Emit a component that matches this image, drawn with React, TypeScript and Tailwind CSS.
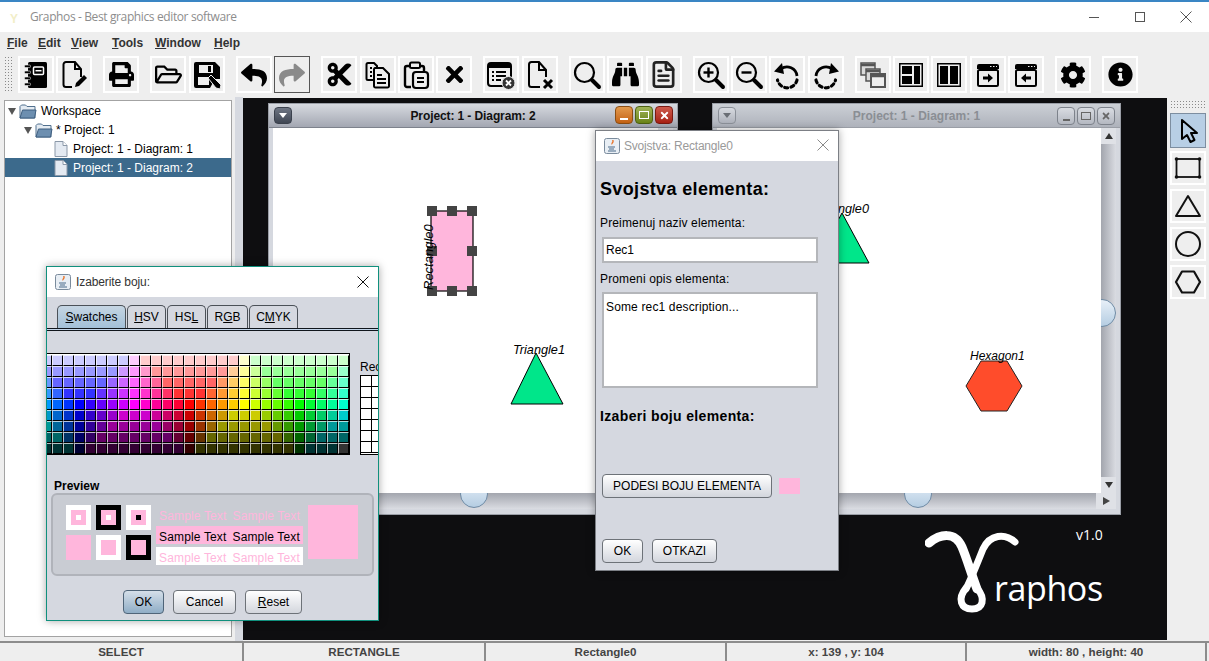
import { ReactNode } from 'react';
import { FaBinoculars, FaCog, FaCut, FaInfoCircle, FaPrint, FaRegFolderOpen, FaReply, FaShare, FaTimes } from 'react-icons/fa';
import { FileText } from 'lucide-react';

const PINK = '#ffb6dc';

const Notebook = () => (
  <svg width="28" height="28" viewBox="0 0 28 28">
    <rect x="6" y="1" width="19" height="26" rx="1.5" fill="#000" />
    <rect x="11.5" y="6" width="10" height="7.5" rx="1" fill="none" stroke="#fff" strokeWidth="1.5" />
    <line x1="13.5" y1="9.7" x2="19.5" y2="9.7" stroke="#fff" strokeWidth="1.5" />
    {[4, 10, 16, 22].map((y) => (
      <rect key={y} x="2.5" y={y} width="6" height="2.6" rx="1" fill="#000" stroke="#eee" strokeWidth="0.6" />
    ))}
  </svg>
);

const FilePencil = () => (
  <svg width="30" height="30" viewBox="0 0 30 30" fill="none" stroke="#000" strokeWidth="2">
    <path d="M13 27H7a2.5 2.5 0 0 1-2.500-2.500V4.500A2.500 2.500 0 0 1 7 2h9l6 7v8" />
    <path d="M16 2v7h6" />
    <path d="M16 27l1-4 8-8 3 3-8 8z" fill="#000" stroke="none" />
  </svg>
);

const SavePen = () => (
  <svg width="30" height="30" viewBox="0 0 30 30">
    <path d="M4 2h19l5 5v12h-5l-5 9H4a2 2 0 0 1-2-2V4a2 2 0 0 1 2-2z" fill="#000" />
    <rect x="7" y="5" width="14" height="8" fill="#eee" />
    <rect x="16" y="6" width="3" height="6" fill="#000" />
    <rect x="6" y="17" width="11" height="8" fill="#eee" />
    <path d="M16 18l3-3 10 10-1 4-4-1z" fill="#000" stroke="#eee" />
  </svg>
);

const CopyDocs = () => (
  <svg width="28" height="28" viewBox="0 0 28 28" fill="none" stroke="#000" strokeWidth="2">
    <path d="M9 19H4a1.500 1.500 0 0 1-1.500-1.500v-14A1.500 1.500 0 0 1 4 2h6l3 3v2" />
    <path d="M11 7h8l6 6v12a1.500 1.500 0 0 1-1.500 1.500h-12A1.500 1.500 0 0 1 10 25V8.500A1.500 1.500 0 0 1 11 7z" />
    <path d="M13 14h5M13 18h9M13 22h9M6 7h2M6 11h2M6 15h2" />
  </svg>
);

const ClipboardDoc = () => (
  <svg width="30" height="30" viewBox="0 0 30 30" fill="none" stroke="#000" strokeWidth="2">
    <path d="M10 27H6a2 2 0 0 1-2-2V8a2 2 0 0 1 2-2h3M19 6h2a2 2 0 0 1 2 2v3" strokeWidth="2.400" />
    <rect x="9" y="2.500" width="10" height="5.500" rx="1.500" />
    <rect x="12" y="12" width="15" height="16" rx="3" strokeWidth="2.200" />
    <path d="M16 18h7M16 22h7" />
  </svg>
);

const ListX = () => (
  <svg width="30" height="30" viewBox="0 0 30 30">
    <rect x="2" y="3" width="23" height="23" rx="3" fill="none" stroke="#000" strokeWidth="2" />
    <rect x="2" y="3" width="23" height="5" fill="#000" />
    <path d="M6 12h2M10 12h10M6 16h2M10 16h10M6 20h2M10 20h5" stroke="#000" strokeWidth="1.800" />
    <circle cx="22.500" cy="23" r="6.500" fill="#333" stroke="#eee" />
    <path d="M20 20.500l5 5M25 20.500l-5 5" stroke="#fff" strokeWidth="1.800" />
  </svg>
);

const FileCross = () => (
  <svg width="30" height="30" viewBox="0 0 30 30" fill="none" stroke="#000" strokeWidth="2">
    <path d="M15 27H6.500A2.500 2.500 0 0 1 4 24.500v-20A2.500 2.500 0 0 1 6.500 2H14l7 8v7" />
    <path d="M14 2v8h7" />
    <path d="M19 20l8 8M27 20l-8 8" strokeWidth="3" />
  </svg>
);

const MagGlass = ({ sign = '' }: { sign?: '' | '+' | '-' }) => (
  <svg width="30" height="30" viewBox="0 0 30 30" fill="none" stroke="#000">
    <circle cx="12.500" cy="12.500" r="9.500" strokeWidth="2.200" />
    <path d="M20 20l7 7" strokeWidth="4" strokeLinecap="round" />
    {sign !== '' && <path d="M7.500 12.500h10" strokeWidth="2.400" />}
    {sign === '+' && <path d="M12.500 7.500v10" strokeWidth="2.400" />}
  </svg>
);

const RotateDots = ({ flip = false }: { flip?: boolean }) => (
  <svg width="30" height="30" viewBox="0 0 30 30" fill="none" stroke="#000" className={flip ? '-scale-x-100' : ''}>
    <path d="M9 9A10 10 0 0 1 25 16" strokeWidth="2.800" />
    <path d="M25 20A10 10 0 0 1 5.500 20" strokeWidth="3.200" strokeDasharray="3 3.500" strokeLinecap="round" />
    <path d="M2 11.500L10 3l2 11z" fill="#000" stroke="none" />
  </svg>
);

const Cascade = () => (
  <svg width="28" height="28" viewBox="0 0 28 28" fill="none" stroke="#555" strokeWidth="1.500">
    <rect x="2" y="2" width="14" height="12" fill="#dadada" />
    <rect x="7" y="8" width="14" height="12" fill="#dadada" />
    <rect x="12" y="13" width="14" height="13" fill="#eee" strokeWidth="2" />
    <path d="M2 4h14M7 10h14M12 15h14" strokeWidth="2.500" />
  </svg>
);

const PanelLayout = () => (
  <svg width="26" height="26" viewBox="0 0 26 26">
    <rect x="1" y="1" width="24" height="24" fill="#000" />
    <rect x="2.500" y="2.500" width="21" height="21" fill="#eee" />
    <rect x="4" y="4" width="10" height="8" fill="#000" />
    <rect x="4" y="14" width="10" height="8" fill="#000" />
    <rect x="16" y="4" width="6" height="18" fill="#000" />
  </svg>
);

const Columns = () => (
  <svg width="26" height="26" viewBox="0 0 26 26">
    <rect x="1" y="1" width="24" height="24" fill="#000" />
    <rect x="2.500" y="2.500" width="21" height="21" fill="#eee" />
    <rect x="4" y="4" width="8" height="18" fill="#000" />
    <rect x="14" y="4" width="8" height="18" fill="#000" />
  </svg>
);

const WindowArrow = ({ left = false }: { left?: boolean }) => (
  <svg width="26" height="26" viewBox="0 0 26 26">
    <path d="M2 4a2 2 0 0 1 2-2h18a2 2 0 0 1 2 2v3H2z" fill="#000" />
    <path d="M15 4.500h1.500M18 4.500h1.500M21 4.500h1" stroke="#eee" />
    <rect x="3" y="8" width="20" height="16" rx="1.500" fill="none" stroke="#000" strokeWidth="2" />
    <path
      d={left ? 'M8 16l5-4.500V14.500h5v3h-5v3z' : 'M18 16l-5-4.500V14.500H8v3h5v3z'}
      fill="#000"
    />
  </svg>
);

const Tool = ({ children, pressed = false }: { children: ReactNode; pressed?: boolean }) => (
  <div
    className={`w-[36px] h-[37px] flex items-center justify-center ${
      pressed ? 'border border-[#555] bg-[#eeeeee]' : 'border-2 border-white bg-[#eeeeee]'
    }`}
  >
    {children}
  </div>
);

const toolGroups: { node: ReactNode; pressed?: boolean }[][] = [
  [{ node: <Notebook /> }, { node: <FilePencil /> }],
  [{ node: <FaPrint size={25} /> }],
  [{ node: <FaRegFolderOpen size={27} /> }, { node: <SavePen /> }],
  [{ node: <FaReply size={26} /> }, { node: <FaShare size={26} color="#8a8a8a" />, pressed: true }],
  [
    { node: <FaCut size={27} /> },
    { node: <CopyDocs /> },
    { node: <ClipboardDoc /> },
    { node: <FaTimes size={25} /> },
  ],
  [{ node: <ListX /> }, { node: <FileCross /> }],
  [
    { node: <MagGlass /> },
    { node: <FaBinoculars size={27} /> },
    { node: <FileText size={29} strokeWidth={2.2} color="#222" /> },
  ],
  [
    { node: <MagGlass sign="+" /> },
    { node: <MagGlass sign="-" /> },
    { node: <RotateDots /> },
    { node: <RotateDots flip /> },
  ],
  [
    { node: <Cascade /> },
    { node: <PanelLayout /> },
    { node: <Columns /> },
    { node: <WindowArrow /> },
    { node: <WindowArrow left /> },
  ],
  [{ node: <FaCog size={26} /> }],
  [{ node: <FaInfoCircle size={25} /> }],
];

const menus = [
  { label: 'File', width: 'w-[31px]' },
  { label: 'Edit', width: 'w-[33px]' },
  { label: 'View', width: 'w-[41px]' },
  { label: 'Tools', width: 'w-[43px]' },
  { label: 'Window', width: 'w-[59px]' },
  { label: 'Help', width: 'w-[40px]' },
];

const Folder = () => (
  <svg width="18" height="17" viewBox="0 0 18 17">
    <path d="M1 15V3.500L2.500 2h4L8 3.500h8V15z" fill="#e4ebf2" stroke="#51708e" />
    <path d="M1 15L3.500 7H17l-1.500 8z" fill="#6d8fb0" stroke="#3f5f80" />
  </svg>
);

const Doc = () => (
  <svg width="14" height="16" viewBox="0 0 14 16">
    <path d="M1 .500h8l4 4v11H1z" fill="#e4eaf2" stroke="#8b98a8" />
    <path d="M9 .500v4h4" fill="#fff" stroke="#8b98a8" />
  </svg>
);

const Arrow = () => <div className="w-0 h-0 border-x-[4px] border-x-transparent border-t-[7px] border-t-[#555]" />;

const hues = [
  '0099ff', '0066ff', '0033ff', '0000ff', '3300ff', '6600ff', '9900ff', 'cc00ff', 'ff00ff', 'ff00cc',
  'ff0099', 'ff0066', 'ff0033', 'ff0000', 'ff3300', 'ff6600', 'ff9900', 'ffcc00', 'ffff00', 'ccff00',
  '99ff00', '66ff00', '33ff00', '00ff00', '00ff33', '00ff66', '00ff99', '00ffcc',
];

const levels = [0xcc, 0x99, 0x66, 0x33];

const swatchColor = (hex: string, row: number) => {
  if (row === 8 && hex === '00ffcc') return '#333333';
  const channels = [0, 2, 4].map((i) => parseInt(hex.slice(i, i + 2), 16));
  const out = channels.map((c) => {
    if (row < 4) return Math.max(c, levels[row]);
    if (row === 4) return c;
    return Math.min(c, levels[row - 5]);
  });
  return `rgb(${out.join(',')})`;
};

const MiniJavaIcon = () => (
  <svg width="16" height="16" viewBox="0 0 16 16">
    <rect x=".500" y=".500" width="15" height="15" rx="2" fill="#e8eef4" stroke="#7a8b9c" />
    <path d="M8 2c1.500 2-2 3 0 5 0-1.500 2.500-2 1.500-5z" fill="#e8742a" />
    <path d="M4 9h7M5 11h5M4 13h8" stroke="#4a6a8a" />
  </svg>
);

const CloseX = ({ color }: { color: string }) => (
  <svg width="12" height="12" viewBox="0 0 12 12" stroke={color} strokeWidth="1">
    <path d="M.500 .500l11 11M11.500 .500l-11 11" />
  </svg>
);

const JButton = ({ children, className, blue = false }: { children: ReactNode; className: string; blue?: boolean }) => (
  <div
    className={`h-[24px] flex items-center justify-center rounded-[4px] border text-[12px] text-black ${
      blue
        ? 'border-[#4f6478] bg-gradient-to-b from-[#d5dfe9] to-[#8fadc6]'
        : 'border-[#6d7278] bg-gradient-to-b from-[#ffffff] to-[#d3d6dd]'
    } ${className}`}
  >
    {children}
  </div>
);

const Tab = ({ active = false, width, children }: { active?: boolean; width: string; children: ReactNode }) => (
  <div
    className={`${width} h-[23px] flex items-center justify-center rounded-t-[5px] border border-b-0 border-[#4b5158] text-[12px] text-black ${
      active ? 'bg-gradient-to-b from-[#c5d5e3] to-[#a3c0d8]' : 'bg-[#d5d8e0]'
    }`}
  >
    {children}
  </div>
);

const WinBtn = ({ tone, children }: { tone: string; children: ReactNode }) => (
  <div className={`w-[18px] h-[18px] rounded-[4px] flex items-center justify-center border ${tone}`}>{children}</div>
);

const VerticalScroll = () => (
  <div className="relative w-[15px] overflow-hidden bg-gradient-to-r from-[#a3a6ae] to-[#dadce2]">
    <div className="h-[16px] bg-[#dfe1e6] flex items-center justify-center">
      <div className="w-0 h-0 border-x-[4px] border-x-transparent border-b-[6px] border-b-[#333]" />
    </div>
    <div className="absolute left-[-13px] top-[171px] w-[28px] h-[28px] rounded-full border border-[#6f8ba5] bg-gradient-to-b from-[#e8f0f8] to-[#b5cde2]" />
    <div className="absolute bottom-0 left-0 w-[15px] h-[16px] bg-[#dfe1e6] flex items-center justify-center">
      <div className="w-0 h-0 border-x-[4px] border-x-transparent border-t-[6px] border-t-[#333]" />
    </div>
  </div>
);

const HorizontalScroll = ({ thumb }: { thumb: string }) => (
  <div className="relative h-[16px] overflow-hidden flex justify-end bg-gradient-to-b from-[#a3a6ae] to-[#dadce2]">
    <div className={`absolute top-[-13px] w-[28px] h-[28px] rounded-full border border-[#6f8ba5] bg-gradient-to-b from-[#e8f0f8] to-[#b5cde2] ${thumb}`} />
    <div className="w-[20px] h-[16px] bg-[#dfe1e6] flex items-center justify-center">
      <div className="w-0 h-0 border-y-[4px] border-y-transparent border-l-[7px] border-l-[#444]" />
    </div>
  </div>
);

const SampleRow = ({ className }: { className: string }) => (
  <div className={`h-[18px] pt-[3px] flex items-center justify-center gap-[6px] tracking-[0.15px] ${className}`}>
    <span>Sample Text</span>
    <span>Sample Text</span>
  </div>
);

const App = () => {
  return (
    <div className="relative w-[1209px] h-[661px] overflow-hidden flex flex-col bg-[#eeeeee] text-black font-['Liberation_Sans',sans-serif]">
      {/* title bar */}
      <div className="h-[32px] shrink-0 flex items-center bg-white border-t-2 border-[#3a86c4] pl-[30px] relative">
        <span className="absolute left-[10px] top-[8px] text-[12px] text-[#f2eec8] font-bold">Y</span>
        <span className="text-[12px] text-[#8d8d8d] font-['Open_Sans',sans-serif] tracking-[-0.38px]">
          Graphos - Best graphics editor software
        </span>
        <div className="ml-auto flex items-center text-[#555]">
          <div className="w-[46px] h-[30px] flex items-center justify-center">
            <div className="w-[10px] h-px bg-[#555]" />
          </div>
          <div className="w-[46px] h-[30px] flex items-center justify-center">
            <div className="w-[10px] h-[10px] border border-[#555]" />
          </div>
          <div className="w-[46px] h-[30px] flex items-center justify-center">
            <CloseX color="#555" />
          </div>
        </div>
      </div>

      {/* menu */}
      <div className="h-[22px] shrink-0 flex items-center pl-[7px] text-[12px] font-bold text-[#333]">
        {menus.map((m) => (
          <span key={m.label} className={m.width}>
            <span className="underline">{m.label[0]}</span>
            {m.label.slice(1)}
          </span>
        ))}
      </div>

      {/* toolbar */}
      <div className="h-[43px] shrink-0 flex items-start pt-[2px] pl-[4px]">
        <div className="w-[9px] h-[37px] bg-[radial-gradient(#8a8a8a_0.7px,transparent_0.8px)] bg-[length:3px_3px]" />
        <div className="ml-[5px] flex gap-[11px]">
          {toolGroups.map((group, i) => (
            <div key={i} className="flex gap-[2.4px]">
              {group.map((tool, j) => (
                <Tool key={j} pressed={tool.pressed}>
                  {tool.node}
                </Tool>
              ))}
            </div>
          ))}
        </div>
      </div>

      {/* main */}
      <div className="flex-1 flex min-h-0">
        <div className="w-[235px] shrink-0 pl-[4px] pr-[3px] pt-[3px] pb-[4px]">
          <div className="h-full bg-white border border-[#a3a3a3] text-[12px]">
            <div className="h-[19px] pt-px flex items-center pl-[3px] gap-[3px]">
              <Arrow />
              <Folder />
              <span className="ml-px">Workspace</span>
            </div>
            <div className="h-[19px] pt-px flex items-center pl-[19px] gap-[3px]">
              <Arrow />
              <Folder />
              <span>* Project: 1</span>
            </div>
            <div className="h-[19px] pt-px flex items-center pl-[49px] gap-[5px]">
              <Doc />
              <span>Project: 1 - Diagram: 1</span>
            </div>
            <div className="h-[19px] pt-px flex items-center pl-[49px] gap-[5px] bg-[#3c6a8c] text-white">
              <Doc />
              <span>Project: 1 - Diagram: 2</span>
            </div>
          </div>
        </div>
        <div className="w-[8px] shrink-0 bg-[#d6d9e0]" />

        {/* desktop */}
        <div className="relative flex-1 mt-px mb-px bg-[#0e0e10]">
          <div className="absolute left-[25px] top-[5px] w-[410px] h-[412px] flex flex-col bg-[#d5d8df] border border-[#9a9ea6]">
            <div className="h-[24px] shrink-0 relative flex items-center justify-center bg-gradient-to-b from-[#d7dae0] to-[#a3a7b2] border-b border-[#7d828c]">
              <div className="absolute left-[5px] top-[3px] w-[18px] h-[17px] rounded-[4px] bg-gradient-to-b from-[#6f7684] to-[#3f4653] flex items-center justify-center border border-[#3b414d]">
                <div className="w-0 h-0 border-x-[4px] border-x-transparent border-t-[5px] border-t-white" />
              </div>
              <span className="text-[12px] font-bold text-[#111] tracking-[-0.1px]">Project: 1 - Diagram: 2</span>
              <div className="absolute right-[4px] top-[2px] flex gap-[2px]">
                <WinBtn tone="border-[#8c4e12] bg-gradient-to-b from-[#e39a4c] to-[#c4620f]">
                  <div className="w-[8px] h-[2px] bg-white mt-[8px]" />
                </WinBtn>
                <WinBtn tone="border-[#4e6112] bg-gradient-to-b from-[#a1b558] to-[#6b8415]">
                  <div className="w-[10px] h-[8px] border border-white" />
                </WinBtn>
                <WinBtn tone="border-[#7a1a12] bg-gradient-to-b from-[#cf5a4c] to-[#a81f12]">
                  <FaTimes size={11} color="#fff" />
                </WinBtn>
              </div>
            </div>
            <div className="flex-1 flex min-h-0 px-[4px]">
              <div className="flex-1 bg-white relative">
                <svg className="absolute inset-0 w-full h-full text-[12px] italic">
                  <rect x="158" y="83" width="42" height="80" fill={PINK} stroke="#000" strokeWidth="1.200" />
                  {[154, 174, 194].flatMap((x) =>
                    [78, 118, 158]
                      .filter((y) => !(x === 174 && y === 118))
                      .map((y) => <rect key={`${x}-${y}`} x={x} y={y} width="10" height="10" fill="#444" />),
                  )}
                  <text x="160" y="162" fontSize="13" transform="rotate(-90 160 162)">Rectangle0</text>
                  <polygon points="263,225 238,276 290,276" fill="#00e68a" stroke="#000" />
                  <text x="240" y="226" fontSize="12.700">Triangle1</text>
                </svg>
              </div>
              <VerticalScroll />
            </div>
            <div className="px-[4px] pb-[5px]">
              <HorizontalScroll thumb="left-[187px]" />
            </div>
          </div>

          <div className="absolute left-[469px] top-[5px] w-[409px] h-[412px] flex flex-col bg-[#d5d8df] border border-[#9a9ea6]">
            <div className="h-[24px] shrink-0 relative flex items-center justify-center bg-gradient-to-b from-[#ccd0d6] to-[#aeb2bb] border-b border-[#9a9ea6]">
              <div className="absolute left-[5px] top-[3px] w-[18px] h-[17px] rounded-[4px] bg-gradient-to-b from-[#d7dae0] to-[#aeb2bb] flex items-center justify-center border border-[#8b9098]">
                <div className="w-0 h-0 border-x-[4px] border-x-transparent border-t-[5px] border-t-[#6a6e75]" />
              </div>
              <span className="text-[12px] font-bold text-[#8a8e94]">Project: 1 - Diagram: 1</span>
              <div className="absolute right-[5px] top-[3px] flex gap-[2px]">
                <WinBtn tone="border-[#7d828b] bg-gradient-to-b from-[#d9dce2] to-[#b4b8c1]">
                  <div className="w-[7px] h-[2px] bg-[#666] mt-[8px]" />
                </WinBtn>
                <WinBtn tone="border-[#7d828b] bg-gradient-to-b from-[#d9dce2] to-[#b4b8c1]">
                  <div className="w-[10px] h-[8px] border border-[#666]" />
                </WinBtn>
                <WinBtn tone="border-[#7d828b] bg-gradient-to-b from-[#d9dce2] to-[#b4b8c1]">
                  <FaTimes size={10} color="#666" />
                </WinBtn>
              </div>
            </div>
            <div className="flex-1 flex min-h-0 pl-[4px] pr-[4px]">
              <div className="flex-1 bg-white relative">
                <svg className="absolute inset-0 w-full h-full text-[12px] italic">
                  <polygon points="125,85 98,135 152,135" fill="#00e68a" stroke="#000" />
                  <text x="100" y="85" fontSize="12.700">Triangle0</text>
                  <polygon points="249,258 264,233 290,233 305,258 290,283 264,283" fill="#ff4c2b" stroke="#222" />
                  <text x="253" y="232">Hexagon1</text>
                </svg>
              </div>
              <VerticalScroll />
            </div>
            <div className="pl-[4px] pr-[4px] pb-[5px]">
              <HorizontalScroll thumb="left-[187px]" />
            </div>
          </div>

          {/* logo */}
          <svg
            className="absolute left-[682px] top-[431px]"
            width="95"
            height="85"
            viewBox="0 0 95 85"
            fill="none"
            stroke="#fff"
            strokeLinecap="round"
          >
            <path d="M4 14C15 5 30 2 37 18C42 30 46 44 52 60" strokeWidth="9" />
            <path d="M90 13C80 4 65 5 58 20C52 35 46 50 41 60" strokeWidth="7" />
            <path d="M41 59C32 70 36 80 47 80C58 80 61 70 52 59" strokeWidth="7" />
          </svg>
          <span className="absolute left-[751px] top-[470px] text-[34px] leading-[40px] text-white font-['Open_Sans',sans-serif] tracking-[-0.4px]">
            raphos
          </span>
          <span className="absolute left-[833px] top-[426px] text-[14px] text-white font-['Open_Sans',sans-serif]">v1.0</span>
        </div>

        {/* right toolbar */}
        <div className="w-[42px] shrink-0 pl-[3px] pt-[3px] flex flex-col">
          <div className="w-[36px] h-[10px] bg-[radial-gradient(#8a8a8a_0.7px,transparent_0.8px)] bg-[length:3px_3px]" />
          <div className="mt-[3px] flex flex-col gap-[4px]">
            <div className="w-[36px] h-[35px] mb-[-1px] flex items-center justify-center bg-[#b8cfe5] border border-[#7d8ea0]">
              <svg width="24" height="28" viewBox="0 0 24 28" fill="none" stroke="#000" strokeWidth="2" strokeLinejoin="round">
                <path d="M6 3v19l5-4 3.500 7 4-2-3.500-7h6z" />
              </svg>
            </div>
            <div className="w-[36px] h-[34px] flex items-center justify-center border-2 border-white bg-[#eeeeee]">
              <svg width="28" height="24" viewBox="0 0 28 24" fill="none" stroke="#111" strokeWidth="1.800">
                <rect x="2.500" y="3" width="23" height="18" />
                <g fill="#111" stroke="none">
                  <circle cx="2.500" cy="3" r="1.800" />
                  <circle cx="25.500" cy="3" r="1.800" />
                  <circle cx="2.500" cy="21" r="1.800" />
                  <circle cx="25.500" cy="21" r="1.800" />
                </g>
              </svg>
            </div>
            <div className="w-[36px] h-[34px] flex items-center justify-center border-2 border-white bg-[#eeeeee]">
              <svg width="28" height="26" viewBox="0 0 28 26" fill="none" stroke="#111" strokeWidth="2" strokeLinejoin="round">
                <path d="M14 3L26 23H2z" />
              </svg>
            </div>
            <div className="w-[36px] h-[34px] flex items-center justify-center border-2 border-white bg-[#eeeeee]">
              <svg width="28" height="28" viewBox="0 0 28 28" fill="none" stroke="#111" strokeWidth="2">
                <circle cx="14" cy="14" r="12" />
              </svg>
            </div>
            <div className="w-[36px] h-[34px] flex items-center justify-center border-2 border-white bg-[#eeeeee]">
              <svg width="28" height="26" viewBox="0 0 28 26" fill="none" stroke="#111" strokeWidth="2.200" strokeLinejoin="round">
                <path d="M2 13L8 2.500H20L26 13L20 23.500H8z" />
              </svg>
            </div>
          </div>
        </div>
      </div>

      {/* status bar */}
      <div className="h-[20px] shrink-0 flex text-[11.600px] font-bold text-[#444] border-t-2 border-[#8c8c8c]">
        <div className="w-[244px] border-r-2 border-[#8c8c8c] flex items-center justify-center">SELECT</div>
        <div className="w-[242px] border-r-2 border-[#8c8c8c] flex items-center justify-center">RECTANGLE</div>
        <div className="w-[241px] border-r-2 border-[#8c8c8c] flex items-center justify-center">Rectangle0</div>
        <div className="w-[240px] border-r-2 border-[#8c8c8c] flex items-center justify-center">x: 139 , y: 104</div>
        <div className="w-[240px] border-r-2 border-[#8c8c8c] flex items-center justify-center">width: 80 , height: 40</div>
      </div>

      {/* color chooser */}
      <div className="absolute left-[46px] top-[266px] w-[333px] h-[355px] flex flex-col bg-[#d5d8e0] border border-[#10907d] shadow-[0_0_8px_rgba(0,0,0,0.35)] text-[12px]">
        <div className="h-[30px] shrink-0 bg-white flex items-center pl-[8px] relative">
          <MiniJavaIcon />
          <span className="ml-[5px] text-[#333] tracking-[-0.1px]">Izaberite boju:</span>
          <div className="absolute right-[9px] top-[9px]">
            <CloseX color="#111" />
          </div>
        </div>
        <div className="pl-[10px] pt-[8px] flex gap-px">
          <Tab active width="w-[69px]">
            <span>
              <span className="underline">S</span>watches
            </span>
          </Tab>
          <Tab width="w-[39px]">
            <span>
              <span className="underline">H</span>SV
            </span>
          </Tab>
          <Tab width="w-[39px]">
            <span>
              HS<span className="underline">L</span>
            </span>
          </Tab>
          <Tab width="w-[41px]">
            <span>
              R<span className="underline">G</span>B
            </span>
          </Tab>
          <Tab width="w-[49px]">
            <span>
              C<span className="underline">M</span>YK
            </span>
          </Tab>
        </div>
        <div className="h-[3px] border-y border-[#10151c] bg-[#c4d6ea]" />
        <div className="mt-[22px] h-[102px] flex overflow-hidden">
          <div className="w-[303px] shrink-0 border-y border-r border-black bg-white flex justify-end overflow-hidden">
            <div className="shrink-0 pt-px">
              {Array.from({ length: 9 }).map((_, row) => (
                <div key={row} className="flex">
                  {hues.map((hue) => (
                    <div
                      key={hue}
                      className="w-[11px] h-[11px] shrink-0 border-t border-l border-r border-b border-t-white/70 border-l-white/70 border-r-black border-b-black"
                      style={{ backgroundColor: swatchColor(hue, row) }}
                    />
                  ))}
                </div>
              ))}
            </div>
          </div>
          <div className="ml-[10px] flex flex-col">
            <span className="h-[22px] leading-[28px] whitespace-nowrap">Rec</span>
            <div className="h-[80px] w-[40px] border border-black bg-white">
              {Array.from({ length: 7 }).map((_, row) => (
                <div key={row} className="flex">
                  {[0, 1, 2].map((c) => (
                    <div key={c} className="w-[11px] h-[11px] border-r border-b border-black" />
                  ))}
                </div>
              ))}
            </div>
          </div>
        </div>

        <div className="pl-[7px] mt-[24px] font-bold h-[14px] leading-[14px]">Preview</div>
        <div className="mx-[4px] h-[83px] rounded-[6px] border-2 border-[#b0b3ba] bg-[#c9ccd3] flex pl-[13px] pt-[10px]">
          <div className="grid grid-cols-3 gap-x-[5px] gap-y-[5px] self-start">
            <div className="w-[25px] h-[25px] bg-white flex items-center justify-center">
              <div className="w-[15px] h-[15px] flex items-center justify-center bg-[#ffb6dc]">
                <div className="w-[5px] h-[5px] bg-white" />
              </div>
            </div>
            <div className="w-[25px] h-[25px] bg-black flex items-center justify-center">
              <div className="w-[15px] h-[15px] flex items-center justify-center bg-[#ffb6dc]">
                <div className="w-[5px] h-[5px] bg-white" />
              </div>
            </div>
            <div className="w-[25px] h-[25px] bg-white flex items-center justify-center">
              <div className="w-[15px] h-[15px] flex items-center justify-center bg-[#ffb6dc]">
                <div className="w-[5px] h-[5px] bg-black" />
              </div>
            </div>
            <div className="w-[25px] h-[25px] bg-[#ffb6dc]" />
            <div className="w-[25px] h-[25px] bg-white flex items-center justify-center">
              <div className="w-[15px] h-[15px] bg-[#ffb6dc]" />
            </div>
            <div className="w-[25px] h-[25px] bg-black flex items-center justify-center">
              <div className="w-[15px] h-[15px] bg-[#ffb6dc]" />
            </div>
          </div>
          <div className="ml-[5px] w-[147px] flex flex-col gap-[3px] whitespace-nowrap">
            <SampleRow className="text-[#ffb6dc]" />
            <SampleRow className="bg-[#ffb6dc] text-black" />
            <SampleRow className="bg-white text-[#ffb6dc]" />
          </div>
          <div className="ml-[5px] w-[50px] h-[54px] bg-[#ffb6dc]" />
        </div>
        <div className="mt-[14px] flex justify-center gap-[9px]">
          <JButton blue className="w-[41px]">OK</JButton>
          <JButton className="w-[63px]">Cancel</JButton>
          <JButton className="w-[57px]">
            <span>
              <span className="underline">R</span>eset
            </span>
          </JButton>
        </div>
      </div>

      {/* properties dialog */}
      <div className="absolute left-[595px] top-[130px] w-[244px] h-[441px] flex flex-col bg-[#d5d8e0] border border-[#7c7f85] shadow-[0_0_8px_rgba(0,0,0,0.35)] text-[12px]">
        <div className="h-[30px] shrink-0 bg-white flex items-center pl-[8px] relative">
          <MiniJavaIcon />
          <span className="ml-[4px] text-[#9a9a9a] tracking-[-0.2px]">Svojstva: Rectangle0</span>
          <div className="absolute right-[9px] top-[8px]">
            <CloseX color="#8a8a8a" />
          </div>
        </div>
        <div className="pl-[4px] pt-[18px] text-[18px] leading-[21px] font-bold tracking-[0.35px]">Svojstva elementa:</div>
        <div className="pl-[4px] mt-[16px] leading-[14px] tracking-[0.15px]">Preimenuj naziv elementa:</div>
        <div className="ml-[6px] mt-[7px] w-[216px] h-[26px] bg-white border-2 border-[#b4b6ba] flex items-center pl-[2px]">Rec1</div>
        <div className="pl-[4px] mt-[9px] leading-[14px] tracking-[0.15px]">Promeni opis elementa:</div>
        <div className="ml-[6px] mt-[6px] w-[216px] h-[96px] bg-white border-2 border-[#b4b6ba] pl-[2px] pt-[4px] tracking-[0.15px]">Some rec1 description...</div>
        <div className="pl-[4px] mt-[20px] text-[14px] leading-[16px] font-bold tracking-[0.35px]">Izaberi boju elementa:</div>
        <div className="ml-[6px] mt-[50px] flex items-center gap-[7px]">
          <JButton className="w-[170px]">PODESI BOJU ELEMENTA</JButton>
          <div className="w-[21px] h-[16px] bg-[#ffb6dc]" />
        </div>
        <div className="ml-[6px] mt-[41px] flex gap-[9px]">
          <JButton className="w-[41px]">OK</JButton>
          <JButton className="w-[65px]">OTKAZI</JButton>
        </div>
      </div>
    </div>
  );
};

export default App;
